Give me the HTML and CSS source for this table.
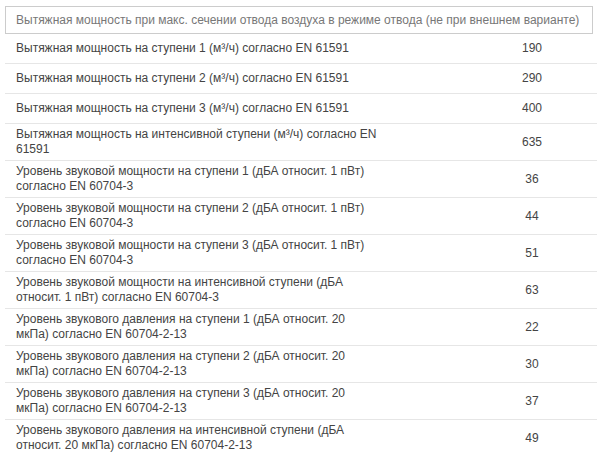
FILE: index.html
```html
<!DOCTYPE html>
<html lang="ru">
<head>
<meta charset="utf-8">
<link rel="stylesheet" href="styles.css">
</head>
<body>
<div class="spec">
  <div class="spec-head">Вытяжная мощность при макс. сечении отвода воздуха в режиме отвода (не при внешнем варианте)</div>
  <div class="row one"><div class="name">Вытяжная мощность на ступени 1 (м³/ч) согласно EN 61591</div><div class="val">190</div></div>
  <div class="row one"><div class="name">Вытяжная мощность на ступени 2 (м³/ч) согласно EN 61591</div><div class="val">290</div></div>
  <div class="row one"><div class="name">Вытяжная мощность на ступени 3 (м³/ч) согласно EN 61591</div><div class="val">400</div></div>
  <div class="row"><div class="name">Вытяжная мощность на интенсивной ступени (м³/ч) согласно EN 61591</div><div class="val">635</div></div>
  <div class="row"><div class="name">Уровень звуковой мощности на ступени 1 (дБА относит. 1 пВт) согласно EN 60704-3</div><div class="val">36</div></div>
  <div class="row"><div class="name">Уровень звуковой мощности на ступени 2 (дБА относит. 1 пВт) согласно EN 60704-3</div><div class="val">44</div></div>
  <div class="row"><div class="name">Уровень звуковой мощности на ступени 3 (дБА относит. 1 пВт) согласно EN 60704-3</div><div class="val">51</div></div>
  <div class="row"><div class="name">Уровень звуковой мощности на интенсивной ступени (дБА относит. 1 пВт) согласно EN 60704-3</div><div class="val">63</div></div>
  <div class="row"><div class="name">Уровень звукового давления на ступени 1 (дБА относит. 20 мкПа) согласно EN 60704-2-13</div><div class="val">22</div></div>
  <div class="row"><div class="name">Уровень звукового давления на ступени 2 (дБА относит. 20 мкПа) согласно EN 60704-2-13</div><div class="val">30</div></div>
  <div class="row"><div class="name">Уровень звукового давления на ступени 3 (дБА относит. 20 мкПа) согласно EN 60704-2-13</div><div class="val">37</div></div>
  <div class="row last"><div class="name">Уровень звукового давления на интенсивной ступени (дБА относит. 20 мкПа) согласно EN 60704-2-13</div><div class="val">49</div></div>
</div>
</body>
</html>
```

FILE: styles.css
```css
html, body {
  margin: 0;
  padding: 0;
  background: #fff;
}
body {
  font-family: "Liberation Sans", Arial, sans-serif;
  font-size: 12px;
  color: #444;
}
.spec {
  padding: 6px 0 0 5px;
}
.spec-head {
  box-sizing: border-box;
  width: 588px;
  height: 28px;
  border: 1px solid #ccc;
  padding: 0 0 0 10px;
  display: flex;
  align-items: center;
  color: #777;
}
.row {
  display: grid;
  grid-template-columns: 462px 130px;
  align-items: center;
  min-height: 36px;
  border-bottom: 1px solid #e6e6e6;
}
.row.one {
  min-height: 29px;
}
.row.last {
  border-bottom: none;
}
.name {
  padding: 3px 0 3px 11px;
  max-width: 363px;
  line-height: 15px;
}
.val {
  text-align: center;
  line-height: 15px;
}
```
